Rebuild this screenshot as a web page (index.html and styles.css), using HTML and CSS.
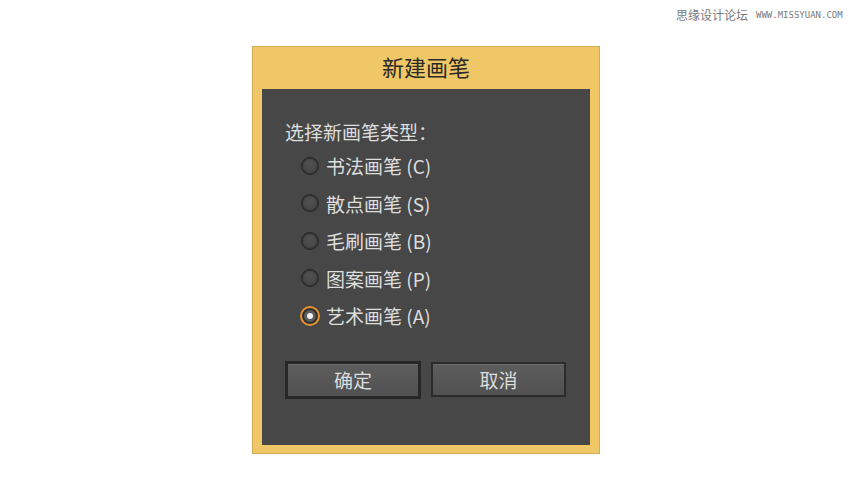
FILE: index.html
```html
<!DOCTYPE html>
<html lang="zh">
<head>
<meta charset="utf-8">
<title>新建画笔</title>
<link rel="stylesheet" href="styles.css">
</head>
<body>
<div class="watermark"><span>思缘设计论坛</span><span class="wm-url">WWW.MISSYUAN.COM</span></div>
<div class="dialog">
  <div class="dialog-title">新建画笔</div>
  <div class="panel">
    <div class="prompt">选择新画笔类型：</div>
    <div class="options">
      <div class="option"><span class="radio"></span><span class="opt-text">书法画笔 (C)</span></div>
      <div class="option"><span class="radio"></span><span class="opt-text">散点画笔 (S)</span></div>
      <div class="option"><span class="radio"></span><span class="opt-text">毛刷画笔 (B)</span></div>
      <div class="option"><span class="radio"></span><span class="opt-text">图案画笔 (P)</span></div>
      <div class="option"><span class="radio checked"></span><span class="opt-text">艺术画笔 (A)</span></div>
    </div>
    <div class="buttons">
      <div class="btn btn-default">确定</div>
      <div class="btn">取消</div>
    </div>
  </div>
</div>
</body>
</html>
```
FILE: styles.css
```css
html, body {
  margin: 0;
  padding: 0;
  background: #ffffff;
}
body {
  width: 850px;
  height: 500px;
  position: relative;
  font-family: "Noto Sans CJK SC", "Noto Sans", sans-serif;
  overflow: hidden;
}
.watermark {
  position: absolute;
  top: 7px;
  left: 676px;
  display: flex;
  align-items: center;
  gap: 8px;
  font-size: 12px;
  line-height: 16px;
  color: #7a7a7a;
  white-space: nowrap;
}
.wm-url {
  font-family: "DejaVu Sans Mono", monospace;
  font-size: 9px;
}
.dialog {
  margin: 46px 0 0 252px;
  border: 1px solid #d3aa55;
  background: #f0c766;
  padding: 0 9px 8px;
  display: flex;
  flex-direction: column;
  width: 328px;
  height: 398px;
}
.dialog-title {
  height: 42px;
  line-height: 38px;
  text-align: center;
  font-size: 22px;
  color: #2b2a26;
}
.panel {
  flex: 1;
  background: #474747;
  padding: 30px 0 0 23px;
  color: #dedede;
  font-size: 19px;
}
.prompt {
  line-height: 26px;
  height: 26px;
}
.options {
  margin: 2px 0 0 16px;
  display: flex;
  flex-direction: column;
}
.option {
  height: 37.5px;
  display: flex;
  align-items: center;
  gap: 7px;
}
.radio {
  width: 16px;
  height: 16px;
  border-radius: 50%;
  border: 1px solid #262626;
  background: radial-gradient(circle at 50% 40%, #525252 0%, #454545 70%, #3a3a3a 100%);
  box-shadow: inset 0 0 0 1px #333;
  position: relative;
  flex: none;
}
.radio.checked {
  border: 2px solid #e5922f;
  width: 16px;
  height: 16px;
  margin-left: -1px;
  margin-right: -1px;
  background: #5c5c5c;
  box-shadow: inset 0 0 0 2px #2d2d2d;
}
.radio.checked::after {
  content: "";
  position: absolute;
  left: 5px;
  top: 5px;
  width: 6px;
  height: 6px;
  border-radius: 50%;
  background: #f2f2f2;
}
.opt-text {
  line-height: 24px;
  padding-top: 1px;
}
.buttons {
  margin-top: 26px;
  display: flex;
  align-items: center;
  gap: 10px;
}
.btn {
  width: 131px;
  height: 31px;
  border: 2px solid #2b2b2b;
  background: linear-gradient(#5d5d5d, #515151);
  box-shadow: inset 0 1px 0 #6a6a6a;
  color: #dcdcdc;
  text-align: center;
  line-height: 31px;
  font-size: 19px;
}
.btn-default {
  width: 130px;
  height: 32px;
  line-height: 32px;
  border: 3px solid #272727;
}
```
